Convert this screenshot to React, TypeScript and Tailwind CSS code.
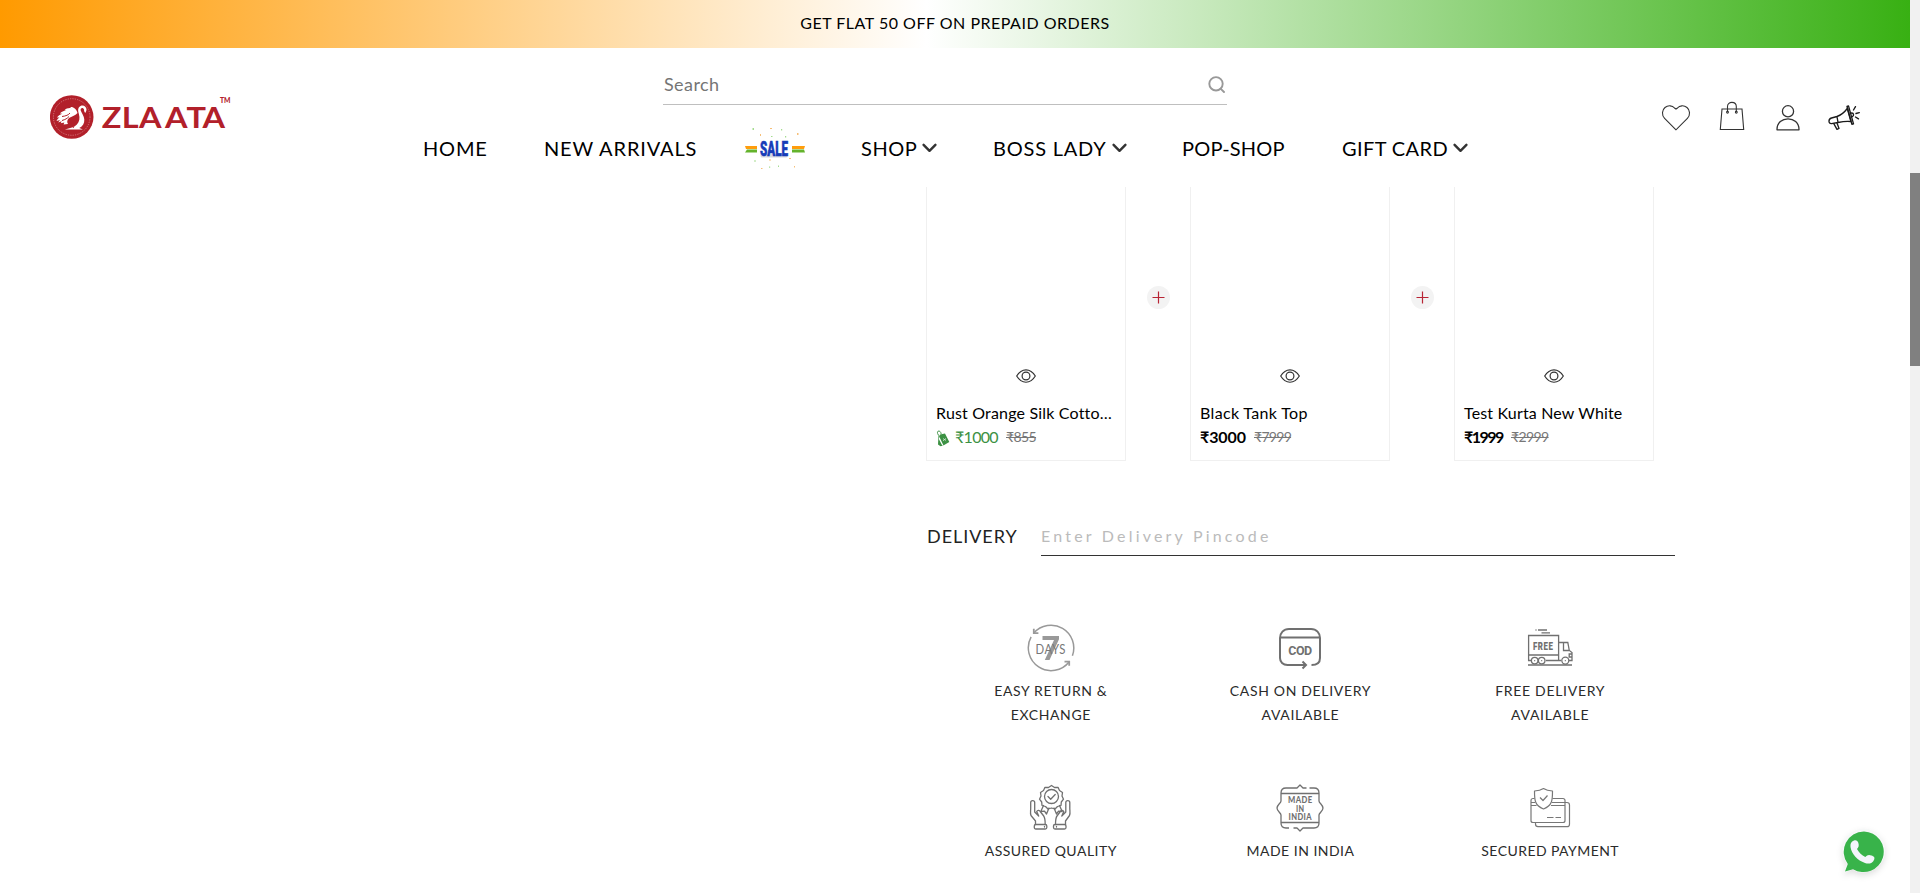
import type { ReactNode } from "react";

const Chevron = () => (
  <svg width="15" height="10" viewBox="0 0 15 10" fill="none" stroke="#333" strokeWidth="2.4" strokeLinecap="round" strokeLinejoin="round">
    <path d="M1.6 1.8 7.5 7.8l5.9-6" />
  </svg>
);

const Logo = () => (
  <svg width="182" height="46" viewBox="0 0 182 46">
    <circle cx="21.7" cy="23" r="21.8" fill="#b2202a" />
    <circle cx="21.7" cy="23" r="18.3" fill="none" stroke="#e7a9ad" strokeWidth=".6" strokeDasharray="1.2 1.2" />
    <path
      fill="#fff"
      d="M36.500 15.500c0-3-3-5-6-3.600-3 1.600-2.600 5-1.600 8 1.200 4 .6 8-2 10.500-1.600 1.600-3.200 2.400-5 3l-7 2.200h18l-3.600-1.600c3.600-1.600 5.200-4.600 5-8.400-.2-3.400-2.600-6.400-3.600-9-.6-2 1.200-3.200 2.600-2.200.8.600.9 1.400.8 2.600l1 2c.9-1 1.300-2.200 1.400-3.500z"
    />
    <path
      fill="#fff"
      d="M27.500 19c-1-4-4-6.500-7.500-6l1.500 1.200c-3-.4-5.500.4-7 2l2 .3c-3 .2-5 1.300-6.500 3l2.300.2c-2.500.8-4 2-5.300 3.800l2.500-.1c-1.500 1-2.300 2-3 3.500l3.500-1-1.800 2.500 3.500-1.200-1 2 3.600-.7-.7 1.900 4.400-.4c-1.500-2.500-.5-5 2-6.500 3-1.600 5.500-2 7.500-4.500z"
    />
    <path fill="none" stroke="#b2202a" strokeWidth="1" d="M12 22.500c4-.5 6.500-1.500 8-3.500M12 26.500c3.500-1 5-2 7-4M20 29c1 2.500 2.500 4 4 4.500M20.500 26c1-1.600 3-2.600 5-3" />
    <text x="47 65.300 80.900 104.500 124 138.600" y="34" transform="scale(1.1 1)" fill="#b2202a" fontFamily="Lato" fontWeight="700" fontSize="29.500">ZLAATA</text>
    <text x="170" y="8.500" fill="#b2202a" fontFamily="Lato" fontWeight="900" fontSize="6.500" textLength="10.500" lengthAdjust="spacingAndGlyphs">TM</text>
  </svg>
);

const Sale = () => (
  <svg width="62" height="44" viewBox="0 0 62 44" className="overflow-visible">
    <path fill="#ff9d0c" d="M1 19h12v3H2zM48 19h13l-1 3H48z" />
    <path fill="#64b32c" d="M3 22.500h10v3H1zM48 22.500h12l1 3H48z" />
    <rect x="16.500" y="27" width="27" height="3.500" rx="1.500" fill="#d6d8e0" />
    <text x="16" y="28.500" fill="#173cb8" stroke="#173cb8" strokeWidth=".6" fontFamily="Roboto" fontWeight="900" fontSize="20" textLength="28" lengthAdjust="spacingAndGlyphs">SALE</text>
    <path fill="#a5dc90" d="M8.500 1h1.500v2H8.500zM37 2h1.200v1.500H37zM27 9h1.500v1H27zM41 9h1.200v1.500H41zM10 33.500h2v1h-2zM34 38.500h1v1.500h-1zM25 39.500h1.200v1.200H25z" />
    <path fill="#f6bf78" d="M26 1h2v1h-2zM16 7h1v2h-1zM53 6h1.500v2H53zM45 31h2v1h-2zM25.500 32h1v2h-1zM17 41h1.500v1H17zM50 39h1v1.500h-1z" />
  </svg>
);

const Heart = () => (
  <svg width="30" height="28" viewBox="0 0 30 28" fill="none" stroke="#333" strokeWidth="1.100">
    <path d="M15 25.800 3.600 14.300C.4 11 1 6 4 3.500c3.200-2.600 7.400-2 9.500.5L15 5l1.500-1c2.100-2.500 6.300-3.100 9.500-.5 3 2.500 3.600 7.500.4 10.800z" />
  </svg>
);
const Bag = () => (
  <svg width="26" height="30" viewBox="0 0 26 30" fill="none" stroke="#333" strokeWidth="1.100">
    <path d="M3 8h20l1.700 20.500H1.300zM8.500 11V5.500C8.500 0 17.300 0 17.300 5.500V11" />
    <circle cx="8.500" cy="11.300" r=".9" />
    <circle cx="17.300" cy="11.300" r=".9" />
  </svg>
);
const User = () => (
  <svg width="24" height="28" viewBox="0 0 24 28" fill="none" stroke="#333" strokeWidth="1.300" strokeLinejoin="round">
    <circle cx="12" cy="6.300" r="5.600" />
    <path d="M1 24.800c-.3-14.600 22.300-14.600 22 0z" />
  </svg>
);
const Megaphone = () => (
  <svg width="33" height="26" viewBox="0 0 33 26" fill="none" stroke="#1a1a1a" strokeWidth="1.350" strokeLinejoin="round" strokeLinecap="round">
    <path d="M9 11.500 3.500 13C0 14 .3 19 3.500 18.600L10 17.500zM9 11.500C13.500 10 17 6.500 19.300 3.500L23 16.500c-4-.5-8.500 0-13 1" />
    <path d="m19 1.500 1.500-.6 5 18-1.600.5zM23.500 8c2.300-.3 2.800 2.700.8 3.600M5.800 18.600 9 24.300l2-.9-2-5.300" />
    <path d="m25.500 5 2-3.300M28 8.500l3.300-.9M27.500 12l3 1.800" />
  </svg>
);

const Eye = () => (
  <svg width="20" height="14" viewBox="0 0 20 14" fill="none" stroke="#333" strokeWidth="1.200">
    <path d="M.7 7C5.700-1.300 14.300-1.300 19.300 7 14.300 15.300 5.700 15.300.7 7z" />
    <circle cx="10" cy="7" r="3.900" />
  </svg>
);

const Tags = () => (
  <svg width="14" height="17" viewBox="0 0 14 17">
    <path fill="#3c9143" d="M2.500 5 2 14.500l2.500 1.800 3-.8zM4 4.500 9 3.500l4.300 8.500L6.500 16 2.800 9z" />
    <path fill="none" stroke="#3c9143" strokeWidth=".9" d="M4 6.500C1.500 5 .8 2 2 1.200 3.500.4 5 2 5.200 4" />
    <path stroke="#fff" strokeWidth=".8" d="m7 10.500 3-1.800M7.500 8.500l.4.600M9.500 10.500l.4.600" />
  </svg>
);

const Returns = () => (
  <svg width="48" height="48" viewBox="0 0 48 48" fill="none" stroke="#999" strokeWidth="1.500">
    <path d="M6.800 9A22.800 22.800 0 0 1 45.400 31.800M42.200 37.700A22.800 22.800 0 0 1 4.100 12.900" />
    <path strokeWidth="1.800" d="M6.800 4.800v4.300h4.600M37.500 37.700h4.700v4" />
    <path fill="#999" stroke="none" d="M15.500 12h16.500v3.200L22.500 36h-4.700l9.200-20H15.500z" />
    <text x="8.500" y="30" fill="#777" stroke="none" fontFamily="Lato" fontSize="13" textLength="30.500" lengthAdjust="spacingAndGlyphs">DAYS</text>
  </svg>
);
const Cod = () => (
  <svg width="48" height="48" viewBox="0 0 48 48" fill="none" stroke="#707070" strokeWidth="2">
    <path d="M30 41H11.500C7 41 4 38 4 34V14c0-5 3.500-9 9-9h22c5.500 0 9 4 9 9v20c0 4-2.500 7-8.500 7M4 13.500h40" />
    <path d="m26.500 37.500 3.500 3.500-3.500 3.500" />
    <text x="12.300" y="31.300" fill="#707070" stroke="none" fontFamily="Roboto" fontWeight="700" fontSize="12.500" textLength="24.500">COD</text>
  </svg>
);
const Truck = () => (
  <svg width="48" height="48" viewBox="0 0 48 48" fill="none" stroke="#707070" strokeWidth="1.300">
    <path d="M5 36.500H2.600v-25h30v25H20M2.600 31h30M32.600 18.500h9.200l1.500 8 2.700 2v8h-3M37.500 18.500v8h5.500M45.500 30h-2.300v3h2.300M32.600 36.500H35M2 41h44M12 6h9M15.500 8.800h8.500M9.500 6h1" />
    <circle cx="8.700" cy="36.600" r="3.300" />
    <circle cx="15.700" cy="36.600" r="3.300" />
    <circle cx="39.300" cy="36.600" r="3.500" />
    <path d="M8.200 36.600h1M15.200 36.600h1M38.800 36.600h1" />
    <text x="7" y="25.800" fill="#707070" stroke="none" fontFamily="Roboto" fontWeight="900" fontSize="10" textLength="20.500" lengthAdjust="spacingAndGlyphs">FREE</text>
  </svg>
);
const Assured = () => (
  <svg width="48" height="48" viewBox="0 0 48 48" fill="none" stroke="#707070" strokeWidth="1.300" strokeLinejoin="round" strokeLinecap="round">
    <path d="m24.500 1.500 3 2 3.500-.2 1.500 3.200 3 2-.5 3.500 1.500 3.200-2.200 2.800-.3 3.500-3.500 1-2.500 2.500-3.500-1-3.500 1-2.500-2.500-3.500-1-.3-3.500-2.200-2.800L14 12l-.5-3.500 3-2L18 3.300l3.500.2z" />
    <circle cx="24.500" cy="12.500" r="7" />
    <path d="m21 12.500 2.700 2.700 4.500-4.700M16.500 21.500l-2.700 6 3.700-.3 2 2.800 2.500-6M32.500 21.500l2.700 6-3.700-.3-2 2.800-2.500-6" />
    <path d="M8.500 40.500V37L4 31.500c-1-2-.3-5-.3-7V18.500c0-2.500 4-2.500 4 0V28l4 4-2-4.500c1-2 3-1 3.500 0l3.500 4.500c1.500 2 1.500 5 1.500 8.500M38.500 40.500V37l4-5.500c1-2 .3-5 .3-7V18.500c0-2.500-4-2.500-4 0V28l-4 4 2-4.500c-1-2-3-1-3.500 0L30 32c-1.500 2-1.500 5-1.500 8.500" />
    <rect x="7.300" y="40.500" width="12.500" height="4.500" rx="1.500" />
    <rect x="26.500" y="40.500" width="12.500" height="4.500" rx="1.500" />
    <path d="M17.500 43v-.5M29.500 43v-.5" />
  </svg>
);
const MadeIn = () => (
  <svg width="48" height="48" viewBox="0 0 48 48" fill="none" stroke="#707070" strokeWidth="1.300" strokeLinejoin="round">
    <path d="M30.500 4H27L24 1l-3 3H10c-3.500 0-5 2-5 5v8c0 2-4 4-4 7s4 5 4 7v8c0 3 1.500 5 5 5h3M17.500 44H21l3 3 3-3h11c3.500 0 5-2 5-5v-8c0-2 4-4 4-7s-4-5-4-7V9c0-3-1.500-5-5-5h-4.500M5 9.500h38M5 38.500h38" />
    <g fill="#707070" stroke="none" fontFamily="Lato" fontWeight="900" fontSize="9">
      <text x="12" y="19" textLength="24.500" lengthAdjust="spacingAndGlyphs">MADE</text>
      <text x="20" y="27.500" textLength="8.500" lengthAdjust="spacingAndGlyphs">IN</text>
      <text x="12.500" y="36" textLength="23.500" lengthAdjust="spacingAndGlyphs">INDIA</text>
    </g>
  </svg>
);
const Secured = () => (
  <svg width="48" height="48" viewBox="0 0 48 48" fill="none" stroke="#777" strokeWidth="1.200" strokeLinejoin="round">
    <path d="M9.500 38.500V40c0 1.500 1 2.700 2.500 2.700h29c1.500 0 2.500-1 2.500-2.500V21c0-1.500-1-2.500-2.500-2.500h-2M8.500 14.500H7A2 2 0 0 0 5 16.500v20c0 1.200.8 2 2 2h30c1.200 0 2-.8 2-2v-20c0-1.200-.8-2-2-2H26.500M5 18.500h4M26 18.500h13M5 21.500h5.500M25 21.500h14" />
    <path d="M17.500 4.500c3 2 6 2.400 9 2.500 0 9 0 14.500-9 18-9-3.500-9-9-9-18 3-.1 6-.5 9-2.500z" />
    <path d="m14 13.500 3 3 4.500-5M21 33.500h6.500M29.500 33.500h5.500" />
  </svg>
);

const WhatsApp = () => (
  <svg width="50" height="52" viewBox="0 0 50 52" className="drop-shadow-md">
    <path fill="#f6f8f8" d="M26.500 1.500a22 22 0 1 1-11 41L6.500 46.500l4-9.500a22 22 0 0 1 16-35.500z" transform="translate(-3.500 -1)" />
    <path fill="#38b34a" d="M24 3.500a20.300 20.300 0 1 1-11 37.700L5 43.500l2.800-7.500A20.300 20.300 0 0 1 24 3.500z" />
    <path fill="#f3f5fb" d="M14 12.500c2-.8 3.700.2 4.300 2.200.8 2.800.6 4.200-1.300 6.300 2 3.500 4.700 6.300 8.300 8 1.900-2.100 3.500-2.600 6.200-1.500 2.200.8 3.700 1.600 2.600 4.200-1.500 3.700-5.500 4.600-9.100 3.300-7.500-2.700-13.300-8.700-14.500-16-.3-3 .5-5.400 3.500-6.500z" />
  </svg>
);

type NavItem = { label: string; menu?: boolean; className: string };
const nav: (NavItem | null)[] = [
  { label: "HOME", className: "tracking-[0.8px]" },
  { label: "NEW ARRIVALS", className: "tracking-[0.85px]" },
  null,
  { label: "SHOP", menu: true, className: "tracking-[0.55px]" },
  { label: "BOSS LADY", menu: true, className: "tracking-[0.78px]" },
  { label: "POP-SHOP", className: "tracking-[0.2px]" },
  { label: "GIFT CARD", menu: true, className: "tracking-[0.4px]" },
];

type ProductProps = { name: string; nameClass: string; price: string; priceClass: string; was: string; wasClass: string; deal?: boolean };
const products: ProductProps[] = [
  { name: "Rust Orange Silk Cotto…", nameClass: "tracking-[0.18px]", price: "₹1000", priceClass: "text-[#3c9143] tracking-[-0.7px] w-[51px]", was: "₹855", wasClass: "tracking-[-0.6px]", deal: true },
  { name: "Black Tank Top", nameClass: "tracking-[0.34px]", price: "₹3000", priceClass: "font-bold tracking-[-0.1px] w-[54px]", was: "₹7999", wasClass: "tracking-[-0.7px]" },
  { name: "Test Kurta New White", nameClass: "tracking-[0.16px]", price: "₹1999", priceClass: "font-bold tracking-[-1.5px] w-[47px]", was: "₹2999", wasClass: "tracking-[-0.6px]" },
];

function Product(p: ProductProps) {
  return (
    <article className="flex h-[274px] w-[200px] flex-col justify-end border border-t-0 border-[#f0f0f0] pb-[11px] pl-[9px]">
      <div className="mb-[18px] flex justify-center pr-[9px]">
        <Eye />
      </div>
      <h3 className={"whitespace-nowrap text-base leading-6 " + p.nameClass}>{p.name}</h3>
      <div className="flex h-6 items-center">
        {p.deal && (
          <span className="mr-[5px] mt-0.5">
            <Tags />
          </span>
        )}
        <span className={"text-base leading-6 " + p.priceClass}>{p.price}</span>
        <span className={"text-sm leading-6 text-[#777] line-through " + p.wasClass}>{p.was}</span>
      </div>
    </article>
  );
}

const Plus = () => (
  <div className="flex w-16 justify-center pt-[99px]">
    <span className="flex h-[23px] w-[23px] items-center justify-center rounded-full bg-[#f3f3f3]">
      <svg width="13" height="13" viewBox="0 0 13 13" stroke="#b82535" strokeWidth="1.200">
        <path d="M6.500.5v12M.5 6.500h12" />
      </svg>
    </span>
  </div>
);

function Feature({ icon, children, className }: { icon: ReactNode; children: ReactNode; className: string }) {
  return (
    <div className={"flex flex-col items-center text-center text-sm leading-6 text-[#2b2b2b] " + className}>
      <div className="mb-[7px] h-12">{icon}</div>
      {children}
    </div>
  );
}

export default function App() {
  return (
    <div className="relative flex h-[893px] w-[1920px] overflow-hidden bg-white font-['Lato',sans-serif] text-black">
      <div className="flex w-[1910px] flex-col">
        <div className="flex h-12 items-center justify-center bg-[linear-gradient(90deg,#ff9a00_0%,#ffffff_48.5%,#38b013_100%)] pb-0.5 text-base tracking-[0.51px]">
          GET FLAT 50 OFF ON PREPAID ORDERS
        </div>

        <header className="flex h-[139px]">
          <div className="w-[423px] pl-[50px] pt-[46px]">
            <Logo />
          </div>
          <div className="w-[1235px]">
            <div className="ml-[240px] mt-[16px] flex h-[41px] w-[564px] items-center justify-between border-b border-[#bfbfbf] pl-px pr-[2px]">
              <span className="text-lg tracking-[0.41px] text-[#757575]">Search</span>
              <svg width="17" height="17" viewBox="0 0 17 17" fill="none" stroke="#999" strokeWidth="1.900" strokeLinecap="round">
                <circle cx="8" cy="7.800" r="6.700" />
                <path d="m12.800 12.800 3.200 3.200" />
              </svg>
            </div>
            <nav className="mt-[20px] grid h-[46px] grid-cols-[121px_200px_117px_132px_189px_160px_140px] items-center">
              {nav.map((n, i) =>
                n ? (
                  <a key={i} className="flex items-center whitespace-nowrap text-xl leading-6">
                    <span className={n.className}>{n.label}</span>
                    {n.menu && (
                      <span className="ml-[5px]">
                        <Chevron />
                      </span>
                    )}
                  </a>
                ) : (
                  <a key={i} className="pt-0.5">
                    <Sale />
                  </a>
                ),
              )}
            </nav>
          </div>
          <div className="flex pl-[3px]">
            <div className="w-[58px] pt-[56px]">
              <Heart />
            </div>
            <div className="w-[57px] pt-[53px]">
              <Bag />
            </div>
            <div className="w-[52px] pt-[57px]">
              <User />
            </div>
            <div className="pt-[57px]">
              <Megaphone />
            </div>
          </div>
        </header>

        <main className="ml-[926px] w-[749px]">
          <section className="flex">
            <Product {...products[0]} />
            <Plus />
            <Product {...products[1]} />
            <Plus />
            <Product {...products[2]} />
          </section>

          <section className="mt-[54px] flex h-[41px] items-center">
            <span className="w-[115px] pl-px text-lg leading-6 tracking-[0.95px] text-[#222]">DELIVERY</span>
            <div className="flex h-full flex-1 items-center border-b border-[#333] pt-px text-base tracking-[3.2px] text-[#bbb]">Enter Delivery Pincode</div>
          </section>

          <section className="mt-[68px] grid grid-cols-3 gap-y-[57px]">
            <Feature icon={<Returns />} className="tracking-[0.62px]">
              EASY RETURN &amp;
              <br />
              EXCHANGE
            </Feature>
            <Feature icon={<Cod />} className="tracking-[0.66px]">
              CASH ON DELIVERY
              <br />
              AVAILABLE
            </Feature>
            <Feature icon={<Truck />} className="tracking-[0.7px]">
              FREE DELIVERY
              <br />
              AVAILABLE
            </Feature>
            <Feature icon={<Assured />} className="tracking-[0.49px]">ASSURED QUALITY</Feature>
            <Feature icon={<MadeIn />} className="tracking-[0.49px]">MADE IN INDIA</Feature>
            <Feature icon={<Secured />} className="tracking-[0.43px]">SECURED PAYMENT</Feature>
          </section>
        </main>
      </div>

      <div className="w-[10px] bg-[#f1f1f1] pt-[173px]">
        <div className="h-[193px] bg-[#808080]" />
      </div>

      <div className="absolute bottom-[13px] right-[30px]">
        <WhatsApp />
      </div>
    </div>
  );
}
